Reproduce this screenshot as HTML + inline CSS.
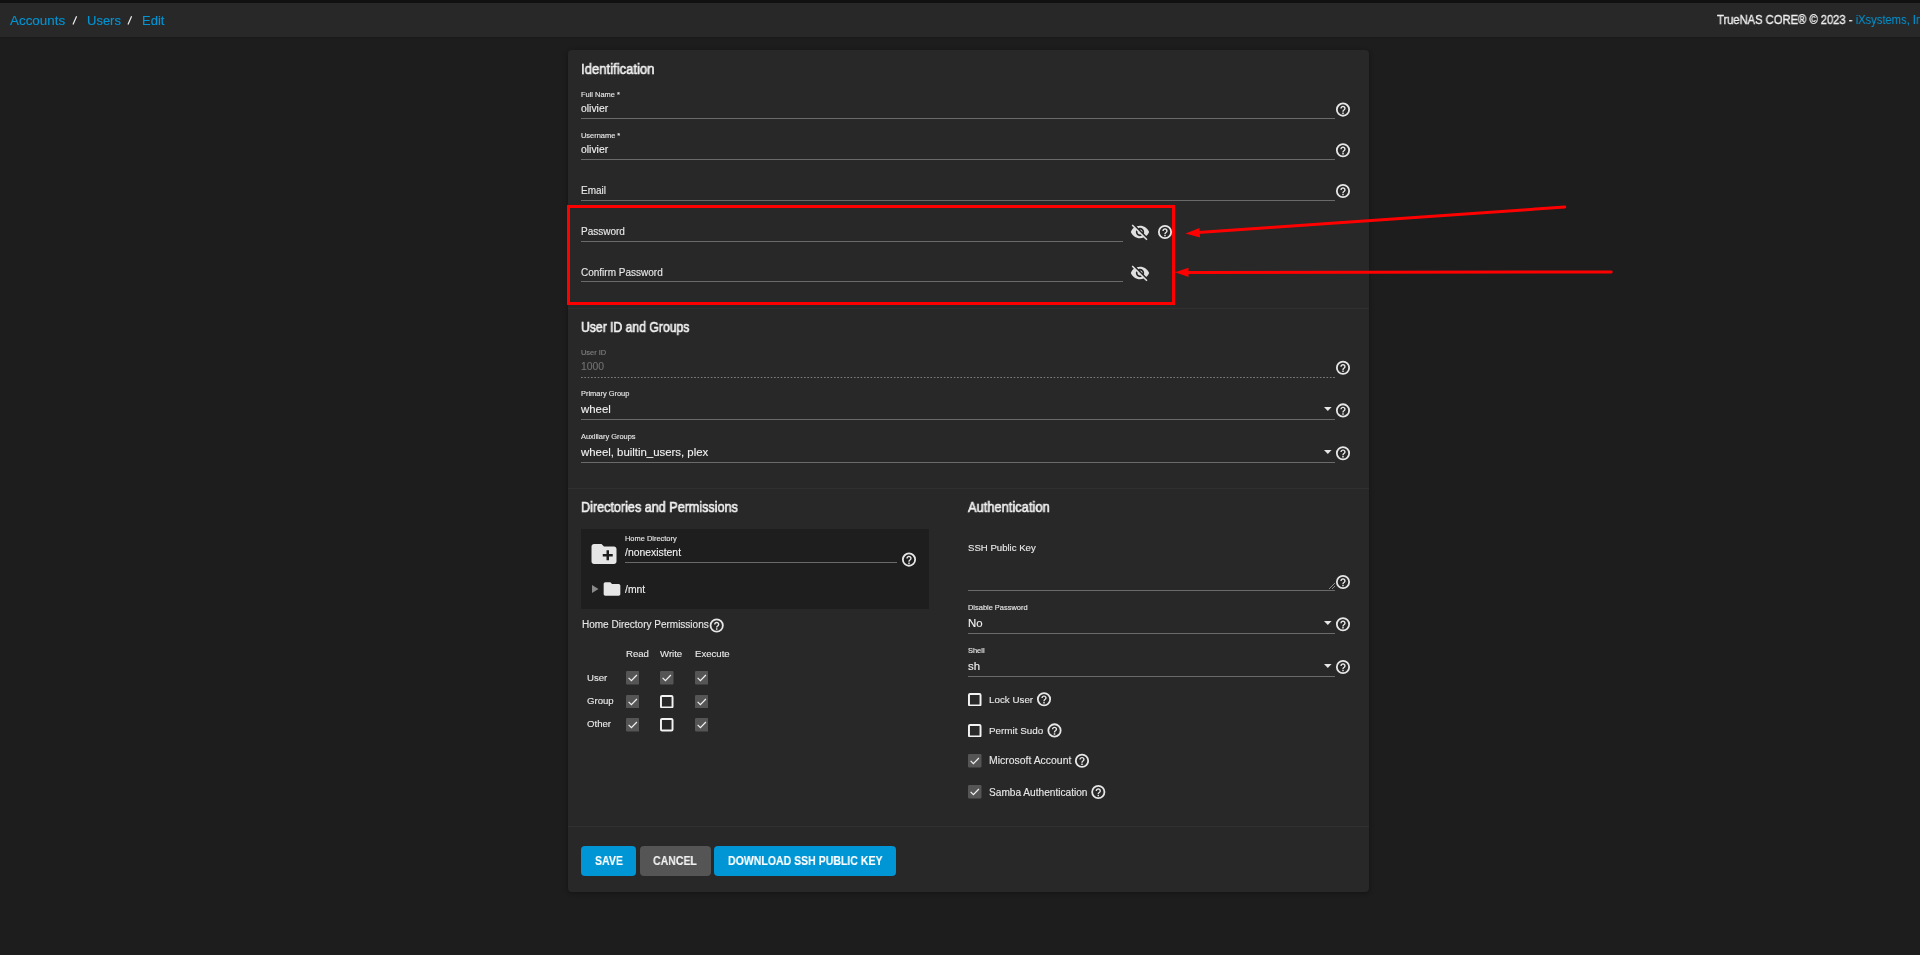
<!DOCTYPE html>
<html><head><meta charset="utf-8"><title>Edit User</title>
<style>
html,body{margin:0;-webkit-font-smoothing:antialiased;padding:0;width:1920px;height:955px;overflow:hidden;background:#1d1d1d;font-family:"Liberation Sans",sans-serif;}
.t{position:absolute;white-space:nowrap;will-change:transform;-webkit-text-stroke:0.12px currentColor;}
.r{position:absolute;}
</style></head><body>
<div class="r" style="left:0px;top:0px;width:1920px;height:3px;background:#111"></div>
<div class="r" style="left:0px;top:3px;width:1920px;height:34px;background:#282828"></div>
<div class="r" style="left:0px;top:37px;width:1920px;height:1px;background:#1a1a1a"></div>
<div class="t" style="left:10px;top:14.07px;font-size:13.4px;line-height:13.4px;color:#0095d5;font-weight:400;">Accounts</div>
<svg width="200" height="40" style="position:absolute;left:0;top:0"><path d="M73 24.6L76.6 16.2M128 24.6L131.6 16.2" stroke="#e8e8e8" stroke-width="1.25"/></svg>
<div class="t" style="left:87.0px;top:14.24px;font-size:13px;line-height:13px;color:#0095d5;font-weight:400;">Users</div>
<div class="t" style="left:142.0px;top:14.24px;font-size:13px;line-height:13px;color:#0095d5;font-weight:400;">Edit</div>
<div class="t" style="left:1716.5px;top:13.78px;font-size:12.9px;line-height:12.9px;color:#efefef;font-weight:400;transform:scaleX(0.868);transform-origin:0 0;-webkit-text-stroke:0.35px #efefef;">TrueNAS CORE® © 2023 - <span style="color:#0095d5;-webkit-text-stroke:0">iXsystems, Inc.</span></div>
<div class="r" style="left:568px;top:50px;width:801px;height:842px;background:#282828;border-radius:4px;box-shadow:0 1px 5px rgba(0,0,0,.35)"></div>
<div class="r" style="left:568px;top:308px;width:801px;height:1px;background:#303030"></div>
<div class="r" style="left:568px;top:488px;width:801px;height:1px;background:#303030"></div>
<div class="r" style="left:568px;top:826px;width:801px;height:1px;background:#303030"></div>
<div class="t" style="left:581px;top:61.82px;font-size:14px;line-height:14px;color:#f0f0f0;font-weight:400;transform:scaleX(0.935);transform-origin:0 0;-webkit-text-stroke:0.6px #f0f0f0;">Identification</div>
<div class="t" style="left:581px;top:91.09px;font-size:7.45px;line-height:7.45px;color:#e8e8e8;font-weight:400;">Full Name *</div>
<div class="t" style="left:581px;top:103.84px;font-size:10.4px;line-height:10.4px;color:#f0f0f0;font-weight:400;">olivier</div>
<div class="r" style="left:581px;top:118px;width:754px;height:1px;background:#6a6a6a"></div>
<svg width="20" height="20" viewBox="0 0 20 20" style="position:absolute;left:1333px;top:99px"><circle cx="10.00" cy="10.60" r="6.15" fill="none" stroke="#e6e6e6" stroke-width="1.8"/><g transform="translate(10.00 10.80) scale(0.64) translate(-12 -12)"><path fill="#e6e6e6" d="M10.85 18.4h2.3v-2.3h-2.3v2.3zm1.15-12.6c-2.3 0-4.15 1.85-4.15 4.15h2.2c0-1.05.9-1.95 1.95-1.95s1.95.9 1.95 1.95c0 1.9-3.1 1.8-3.1 5.05h2.2c0-2.2 3.1-2.6 3.1-5.05 0-2.3-1.850-4.15-4.15-4.15z"/></g></svg>
<div class="t" style="left:581px;top:132.09px;font-size:7.45px;line-height:7.45px;color:#e8e8e8;font-weight:400;">Username *</div>
<div class="t" style="left:581px;top:144.84px;font-size:10.4px;line-height:10.4px;color:#f0f0f0;font-weight:400;">olivier</div>
<div class="r" style="left:581px;top:159px;width:754px;height:1px;background:#6a6a6a"></div>
<svg width="20" height="20" viewBox="0 0 20 20" style="position:absolute;left:1333px;top:140px"><circle cx="10.00" cy="10.30" r="6.15" fill="none" stroke="#e6e6e6" stroke-width="1.8"/><g transform="translate(10.00 10.50) scale(0.64) translate(-12 -12)"><path fill="#e6e6e6" d="M10.85 18.4h2.3v-2.3h-2.3v2.3zm1.15-12.6c-2.3 0-4.15 1.85-4.15 4.15h2.2c0-1.05.9-1.95 1.95-1.95s1.95.9 1.95 1.95c0 1.9-3.1 1.8-3.1 5.05h2.2c0-2.2 3.1-2.6 3.1-5.05 0-2.3-1.850-4.15-4.15-4.15z"/></g></svg>
<div class="t" style="left:581px;top:186.01px;font-size:10px;line-height:10px;color:#e8e8e8;font-weight:400;">Email</div>
<div class="r" style="left:581px;top:200px;width:754px;height:1px;background:#6a6a6a"></div>
<svg width="20" height="20" viewBox="0 0 20 20" style="position:absolute;left:1333px;top:181px"><circle cx="10.00" cy="10.00" r="6.15" fill="none" stroke="#e6e6e6" stroke-width="1.8"/><g transform="translate(10.00 10.20) scale(0.64) translate(-12 -12)"><path fill="#e6e6e6" d="M10.85 18.4h2.3v-2.3h-2.3v2.3zm1.15-12.6c-2.3 0-4.15 1.85-4.15 4.15h2.2c0-1.05.9-1.95 1.95-1.95s1.95.9 1.95 1.95c0 1.9-3.1 1.8-3.1 5.05h2.2c0-2.2 3.1-2.6 3.1-5.05 0-2.3-1.850-4.15-4.15-4.15z"/></g></svg>
<div class="t" style="left:581px;top:227.01px;font-size:10px;line-height:10px;color:#e8e8e8;font-weight:400;">Password</div>
<div class="r" style="left:581px;top:241px;width:542px;height:1px;background:#6a6a6a"></div>
<svg width="20" height="20" viewBox="0 0 20 20" style="position:absolute;left:1155px;top:222px"><circle cx="10.00" cy="10.00" r="6.15" fill="none" stroke="#e6e6e6" stroke-width="1.8"/><g transform="translate(10.00 10.20) scale(0.64) translate(-12 -12)"><path fill="#e6e6e6" d="M10.85 18.4h2.3v-2.3h-2.3v2.3zm1.15-12.6c-2.3 0-4.15 1.85-4.15 4.15h2.2c0-1.05.9-1.95 1.95-1.95s1.95.9 1.95 1.95c0 1.9-3.1 1.8-3.1 5.05h2.2c0-2.2 3.1-2.6 3.1-5.05 0-2.3-1.850-4.15-4.15-4.15z"/></g></svg>
<svg width="20" height="20" viewBox="0 0 24 24" style="position:absolute;left:1130.00px;top:222.00px"><path fill="#e0e0e0" d="M12 7c2.76 0 5 2.24 5 5 0 .65-.13 1.26-.36 1.83l2.92 2.92c1.510-1.26 2.7-2.89 3.43-4.75-1.73-4.39-6-7.5-11-7.5-1.4 0-2.74.25-3.98.7l2.16 2.16C10.74 7.13 11.350 7 12 7zM2 4.27l2.28 2.28.46.46C3.08 8.3 1.78 10.02 1 12c1.73 4.39 6 7.5 11 7.5 1.55 0 3.03-.3 4.38-.84l.42.42L19.73 22 21 20.73 3.27 3 2 4.27zM7.53 9.8l1.55 1.55c-.05.21-.08.43-.08.65 0 1.66 1.34 3 3 3 .22 0 .44-.03.65-.08l1.55 1.55c-.67.33-1.41.53-2.2.53-2.76 0-5-2.24-5-5 0-.79.2-1.53.53-2.2zm4.31-.78l3.15 3.15.02-.16c0-1.66-1.34-3-3-3l-.17.01z"/></svg>
<div class="t" style="left:581px;top:268.01px;font-size:10px;line-height:10px;color:#e8e8e8;font-weight:400;">Confirm Password</div>
<div class="r" style="left:581px;top:281px;width:542px;height:1px;background:#6a6a6a"></div>
<svg width="20" height="20" viewBox="0 0 24 24" style="position:absolute;left:1130.00px;top:262.50px"><path fill="#e0e0e0" d="M12 7c2.76 0 5 2.24 5 5 0 .65-.13 1.26-.36 1.83l2.92 2.92c1.510-1.26 2.7-2.89 3.43-4.75-1.73-4.39-6-7.5-11-7.5-1.4 0-2.74.25-3.98.7l2.16 2.16C10.74 7.13 11.350 7 12 7zM2 4.27l2.28 2.28.46.46C3.08 8.3 1.78 10.02 1 12c1.73 4.39 6 7.5 11 7.5 1.55 0 3.03-.3 4.38-.84l.42.42L19.73 22 21 20.73 3.27 3 2 4.27zM7.53 9.8l1.55 1.55c-.05.21-.08.43-.08.65 0 1.66 1.34 3 3 3 .22 0 .44-.03.65-.08l1.55 1.55c-.67.33-1.41.53-2.2.53-2.76 0-5-2.24-5-5 0-.79.2-1.53.53-2.2zm4.31-.78l3.15 3.15.02-.16c0-1.66-1.34-3-3-3l-.17.01z"/></svg>
<div class="t" style="left:581px;top:319.82px;font-size:14px;line-height:14px;color:#f0f0f0;font-weight:400;transform:scaleX(0.87);transform-origin:0 0;-webkit-text-stroke:0.6px #f0f0f0;">User ID and Groups</div>
<div class="t" style="left:581px;top:349.09px;font-size:7.45px;line-height:7.45px;color:#808080;font-weight:400;">User ID</div>
<div class="t" style="left:581px;top:361.84px;font-size:10.4px;line-height:10.4px;color:#707070;font-weight:400;">1000</div>
<div class="r" style="left:581px;top:377px;width:754px;height:1px;background-image:linear-gradient(90deg,#7a7a7a 60%,transparent 60%);background-size:3.33px 1px"></div>
<svg width="20" height="20" viewBox="0 0 20 20" style="position:absolute;left:1333px;top:357px"><circle cx="10.00" cy="10.80" r="6.15" fill="none" stroke="#e6e6e6" stroke-width="1.8"/><g transform="translate(10.00 11.00) scale(0.64) translate(-12 -12)"><path fill="#e6e6e6" d="M10.85 18.4h2.3v-2.3h-2.3v2.3zm1.15-12.6c-2.3 0-4.15 1.85-4.15 4.15h2.2c0-1.05.9-1.95 1.95-1.95s1.95.9 1.95 1.95c0 1.9-3.1 1.8-3.1 5.05h2.2c0-2.2 3.1-2.6 3.1-5.05 0-2.3-1.850-4.15-4.15-4.15z"/></g></svg>
<div class="t" style="left:581px;top:390.09px;font-size:7.45px;line-height:7.45px;color:#e8e8e8;font-weight:400;">Primary Group</div>
<div class="t" style="left:581px;top:403.92px;font-size:11.4px;line-height:11.4px;color:#f0f0f0;font-weight:400;">wheel</div>
<div class="r" style="left:581px;top:419px;width:754px;height:1px;background:#6a6a6a"></div>
<svg width="20" height="20" viewBox="0 0 20 20" style="position:absolute;left:1333px;top:400px"><circle cx="10.00" cy="10.40" r="6.15" fill="none" stroke="#e6e6e6" stroke-width="1.8"/><g transform="translate(10.00 10.60) scale(0.64) translate(-12 -12)"><path fill="#e6e6e6" d="M10.85 18.4h2.3v-2.3h-2.3v2.3zm1.15-12.6c-2.3 0-4.15 1.85-4.15 4.15h2.2c0-1.05.9-1.95 1.95-1.95s1.95.9 1.95 1.95c0 1.9-3.1 1.8-3.1 5.05h2.2c0-2.2 3.1-2.6 3.1-5.05 0-2.3-1.850-4.15-4.15-4.15z"/></g></svg>
<svg width="7.6" height="4" style="position:absolute;left:1324px;top:407.4px" viewBox="0 0 10 5" preserveAspectRatio="none"><path d="M0 0L10 0L5 5z" fill="#e6e6e6"/></svg>
<div class="t" style="left:581px;top:433.09px;font-size:7.45px;line-height:7.45px;color:#e8e8e8;font-weight:400;">Auxiliary Groups</div>
<div class="t" style="left:581px;top:446.92px;font-size:11.4px;line-height:11.4px;color:#f0f0f0;font-weight:400;">wheel, builtin_users, plex</div>
<div class="r" style="left:581px;top:462px;width:754px;height:1px;background:#6a6a6a"></div>
<svg width="20" height="20" viewBox="0 0 20 20" style="position:absolute;left:1333px;top:443px"><circle cx="10.00" cy="10.20" r="6.15" fill="none" stroke="#e6e6e6" stroke-width="1.8"/><g transform="translate(10.00 10.40) scale(0.64) translate(-12 -12)"><path fill="#e6e6e6" d="M10.85 18.4h2.3v-2.3h-2.3v2.3zm1.15-12.6c-2.3 0-4.15 1.85-4.15 4.15h2.2c0-1.05.9-1.95 1.95-1.95s1.95.9 1.95 1.95c0 1.9-3.1 1.8-3.1 5.05h2.2c0-2.2 3.1-2.6 3.1-5.05 0-2.3-1.850-4.15-4.15-4.15z"/></g></svg>
<svg width="7.6" height="4" style="position:absolute;left:1324px;top:450.2px" viewBox="0 0 10 5" preserveAspectRatio="none"><path d="M0 0L10 0L5 5z" fill="#e6e6e6"/></svg>
<div class="t" style="left:581px;top:499.82px;font-size:14px;line-height:14px;color:#f0f0f0;font-weight:400;transform:scaleX(0.9);transform-origin:0 0;-webkit-text-stroke:0.6px #f0f0f0;">Directories and Permissions</div>
<div class="r" style="left:581px;top:529px;width:348px;height:80px;background:#1e1e1e"></div>
<svg width="30" height="30" viewBox="0 0 24 24" style="position:absolute;left:588.5px;top:538.5px"><path fill="#e6e6e6" d="M20 6h-8l-2-2H4c-1.11 0-1.99.89-1.99 2L2 18c0 1.11.89 2 2 2h16c1.11 0 2-.89 2-2V8c0-1.11-.89-2-2-2z"/><path fill="#1e1e1e" d="M19 14h-3v3h-2v-3h-3v-2h3V9h2v3h3v2z"/></svg>
<div class="t" style="left:625px;top:535.09px;font-size:7.45px;line-height:7.45px;color:#e8e8e8;font-weight:400;">Home Directory</div>
<div class="t" style="left:625px;top:547.84px;font-size:10.4px;line-height:10.4px;color:#f0f0f0;font-weight:400;">/nonexistent</div>
<div class="r" style="left:625px;top:562px;width:272px;height:1px;background:#6a6a6a"></div>
<svg width="20" height="20" viewBox="0 0 20 20" style="position:absolute;left:899px;top:549px"><circle cx="10.00" cy="10.60" r="6.15" fill="none" stroke="#e6e6e6" stroke-width="1.8"/><g transform="translate(10.00 10.80) scale(0.64) translate(-12 -12)"><path fill="#e6e6e6" d="M10.85 18.4h2.3v-2.3h-2.3v2.3zm1.15-12.6c-2.3 0-4.15 1.85-4.15 4.15h2.2c0-1.05.9-1.95 1.95-1.95s1.95.9 1.95 1.95c0 1.9-3.1 1.8-3.1 5.05h2.2c0-2.2 3.1-2.6 3.1-5.05 0-2.3-1.850-4.15-4.15-4.15z"/></g></svg>
<svg width="7" height="8" viewBox="0 0 7 8" style="position:absolute;left:592px;top:585px"><path d="M0 0L6.5 4L0 8z" fill="#8a8a8a"/></svg>
<svg width="20" height="20" viewBox="0 0 24 24" style="position:absolute;left:602px;top:578.7px"><path fill="#e6e6e6" d="M10 4H4c-1.1 0-1.99.9-1.99 2L2 18c0 1.1.9 2 2 2h16c1.1 0 2-.9 2-2V8c0-1.1-.9-2-2-2h-8l-2-2z"/></svg>
<div class="t" style="left:625px;top:584.84px;font-size:10.4px;line-height:10.4px;color:#f0f0f0;font-weight:400;">/mnt</div>
<div class="t" style="left:581.5px;top:620.01px;font-size:10px;line-height:10px;color:#e8e8e8;font-weight:400;">Home Directory Permissions</div>
<svg width="20" height="20" viewBox="0 0 20 20" style="position:absolute;left:706px;top:615px"><circle cx="10.70" cy="10.50" r="6.15" fill="none" stroke="#e6e6e6" stroke-width="1.8"/><g transform="translate(10.70 10.70) scale(0.64) translate(-12 -12)"><path fill="#e6e6e6" d="M10.85 18.4h2.3v-2.3h-2.3v2.3zm1.15-12.6c-2.3 0-4.15 1.85-4.15 4.15h2.2c0-1.05.9-1.95 1.95-1.95s1.95.9 1.95 1.95c0 1.9-3.1 1.8-3.1 5.05h2.2c0-2.2 3.1-2.6 3.1-5.05 0-2.3-1.850-4.15-4.15-4.15z"/></g></svg>
<div class="t" style="left:626px;top:649.18px;font-size:9.6px;line-height:9.6px;color:#e8e8e8;font-weight:400;">Read</div>
<div class="t" style="left:660px;top:649.18px;font-size:9.6px;line-height:9.6px;color:#e8e8e8;font-weight:400;">Write</div>
<div class="t" style="left:695px;top:649.18px;font-size:9.6px;line-height:9.6px;color:#e8e8e8;font-weight:400;">Execute</div>
<div class="t" style="left:587.3px;top:673.18px;font-size:9.6px;line-height:9.6px;color:#e8e8e8;font-weight:400;">User</div>
<svg width="13.5" height="13.5" viewBox="0 0 18 18" style="position:absolute;left:625.8px;top:671.3px"><rect x="0" y="0" width="18" height="18" rx="1.5" fill="#555"/><path d="M3.5 9.2 L7.2 12.8 L14.5 5.3" fill="none" stroke="#f2f2f2" stroke-width="1.6"/></svg>
<svg width="13.5" height="13.5" viewBox="0 0 18 18" style="position:absolute;left:660.1px;top:671.3px"><rect x="0" y="0" width="18" height="18" rx="1.5" fill="#555"/><path d="M3.5 9.2 L7.2 12.8 L14.5 5.3" fill="none" stroke="#f2f2f2" stroke-width="1.6"/></svg>
<svg width="13.5" height="13.5" viewBox="0 0 18 18" style="position:absolute;left:694.8px;top:671.3px"><rect x="0" y="0" width="18" height="18" rx="1.5" fill="#555"/><path d="M3.5 9.2 L7.2 12.8 L14.5 5.3" fill="none" stroke="#f2f2f2" stroke-width="1.6"/></svg>
<div class="t" style="left:587.3px;top:696.18px;font-size:9.6px;line-height:9.6px;color:#e8e8e8;font-weight:400;">Group</div>
<svg width="13.5" height="13.5" viewBox="0 0 18 18" style="position:absolute;left:625.8px;top:694.7px"><rect x="0" y="0" width="18" height="18" rx="1.5" fill="#555"/><path d="M3.5 9.2 L7.2 12.8 L14.5 5.3" fill="none" stroke="#f2f2f2" stroke-width="1.6"/></svg>
<svg width="13.5" height="13.5" viewBox="0 0 18 18" style="position:absolute;left:660.1px;top:694.7px"><rect x="1.3" y="1.3" width="15.4" height="15.4" rx="1.5" fill="none" stroke="#f2f2f2" stroke-width="2.6"/></svg>
<svg width="13.5" height="13.5" viewBox="0 0 18 18" style="position:absolute;left:694.8px;top:694.7px"><rect x="0" y="0" width="18" height="18" rx="1.5" fill="#555"/><path d="M3.5 9.2 L7.2 12.8 L14.5 5.3" fill="none" stroke="#f2f2f2" stroke-width="1.6"/></svg>
<div class="t" style="left:587.3px;top:719.18px;font-size:9.6px;line-height:9.6px;color:#e8e8e8;font-weight:400;">Other</div>
<svg width="13.5" height="13.5" viewBox="0 0 18 18" style="position:absolute;left:625.8px;top:718px"><rect x="0" y="0" width="18" height="18" rx="1.5" fill="#555"/><path d="M3.5 9.2 L7.2 12.8 L14.5 5.3" fill="none" stroke="#f2f2f2" stroke-width="1.6"/></svg>
<svg width="13.5" height="13.5" viewBox="0 0 18 18" style="position:absolute;left:660.1px;top:718px"><rect x="1.3" y="1.3" width="15.4" height="15.4" rx="1.5" fill="none" stroke="#f2f2f2" stroke-width="2.6"/></svg>
<svg width="13.5" height="13.5" viewBox="0 0 18 18" style="position:absolute;left:694.8px;top:718px"><rect x="0" y="0" width="18" height="18" rx="1.5" fill="#555"/><path d="M3.5 9.2 L7.2 12.8 L14.5 5.3" fill="none" stroke="#f2f2f2" stroke-width="1.6"/></svg>
<div class="t" style="left:968.3px;top:499.82px;font-size:14px;line-height:14px;color:#f0f0f0;font-weight:400;transform:scaleX(0.92);transform-origin:0 0;-webkit-text-stroke:0.6px #f0f0f0;">Authentication</div>
<div class="t" style="left:967.6px;top:543.18px;font-size:9.6px;line-height:9.6px;color:#e8e8e8;font-weight:400;">SSH Public Key</div>
<div class="r" style="left:968px;top:590px;width:367px;height:1px;background:#6a6a6a"></div>
<svg width="6" height="6" viewBox="0 0 6 6" style="position:absolute;left:1328.5px;top:582.5px"><path d="M6 0L0 6M6 3L3 6" stroke="#aaa" stroke-width="0.8"/></svg>
<svg width="20" height="20" viewBox="0 0 20 20" style="position:absolute;left:1333px;top:572px"><circle cx="10.00" cy="10.00" r="6.15" fill="none" stroke="#e6e6e6" stroke-width="1.8"/><g transform="translate(10.00 10.20) scale(0.64) translate(-12 -12)"><path fill="#e6e6e6" d="M10.85 18.4h2.3v-2.3h-2.3v2.3zm1.15-12.6c-2.3 0-4.15 1.85-4.15 4.15h2.2c0-1.05.9-1.95 1.95-1.95s1.95.9 1.95 1.95c0 1.9-3.1 1.8-3.1 5.05h2.2c0-2.2 3.1-2.6 3.1-5.05 0-2.3-1.850-4.15-4.15-4.15z"/></g></svg>
<div class="t" style="left:968px;top:604.09px;font-size:7.45px;line-height:7.45px;color:#e8e8e8;font-weight:400;">Disable Password</div>
<div class="t" style="left:968px;top:617.92px;font-size:11.4px;line-height:11.4px;color:#f0f0f0;font-weight:400;">No</div>
<div class="r" style="left:968px;top:633px;width:367px;height:1px;background:#6a6a6a"></div>
<svg width="20" height="20" viewBox="0 0 20 20" style="position:absolute;left:1333px;top:614px"><circle cx="10.00" cy="10.30" r="6.15" fill="none" stroke="#e6e6e6" stroke-width="1.8"/><g transform="translate(10.00 10.50) scale(0.64) translate(-12 -12)"><path fill="#e6e6e6" d="M10.85 18.4h2.3v-2.3h-2.3v2.3zm1.15-12.6c-2.3 0-4.15 1.85-4.15 4.15h2.2c0-1.05.9-1.95 1.95-1.95s1.95.9 1.95 1.95c0 1.9-3.1 1.8-3.1 5.05h2.2c0-2.2 3.1-2.6 3.1-5.05 0-2.3-1.850-4.15-4.15-4.15z"/></g></svg>
<svg width="7.6" height="4" style="position:absolute;left:1324px;top:621px" viewBox="0 0 10 5" preserveAspectRatio="none"><path d="M0 0L10 0L5 5z" fill="#e6e6e6"/></svg>
<div class="t" style="left:968px;top:647.09px;font-size:7.45px;line-height:7.45px;color:#e8e8e8;font-weight:400;">Shell</div>
<div class="t" style="left:968px;top:660.92px;font-size:11.4px;line-height:11.4px;color:#f0f0f0;font-weight:400;">sh</div>
<div class="r" style="left:968px;top:676px;width:367px;height:1px;background:#6a6a6a"></div>
<svg width="20" height="20" viewBox="0 0 20 20" style="position:absolute;left:1333px;top:657px"><circle cx="10.00" cy="10.00" r="6.15" fill="none" stroke="#e6e6e6" stroke-width="1.8"/><g transform="translate(10.00 10.20) scale(0.64) translate(-12 -12)"><path fill="#e6e6e6" d="M10.85 18.4h2.3v-2.3h-2.3v2.3zm1.15-12.6c-2.3 0-4.15 1.85-4.15 4.15h2.2c0-1.05.9-1.95 1.95-1.95s1.95.9 1.95 1.95c0 1.9-3.1 1.8-3.1 5.05h2.2c0-2.2 3.1-2.6 3.1-5.05 0-2.3-1.850-4.15-4.15-4.15z"/></g></svg>
<svg width="7.6" height="4" style="position:absolute;left:1324px;top:664px" viewBox="0 0 10 5" preserveAspectRatio="none"><path d="M0 0L10 0L5 5z" fill="#e6e6e6"/></svg>
<svg width="13.5" height="13.5" viewBox="0 0 18 18" style="position:absolute;left:968.3px;top:692.5px"><rect x="1.3" y="1.3" width="15.4" height="15.4" rx="1.5" fill="none" stroke="#f2f2f2" stroke-width="2.6"/></svg>
<div class="t" style="left:989px;top:695.09px;font-size:9.8px;line-height:9.8px;color:#e8e8e8;font-weight:400;">Lock User</div>
<svg width="20" height="20" viewBox="0 0 20 20" style="position:absolute;left:1034px;top:689px"><circle cx="10.00" cy="10.20" r="6.15" fill="none" stroke="#e6e6e6" stroke-width="1.8"/><g transform="translate(10.00 10.40) scale(0.64) translate(-12 -12)"><path fill="#e6e6e6" d="M10.85 18.4h2.3v-2.3h-2.3v2.3zm1.15-12.6c-2.3 0-4.15 1.85-4.15 4.15h2.2c0-1.05.9-1.95 1.95-1.95s1.95.9 1.95 1.95c0 1.9-3.1 1.8-3.1 5.05h2.2c0-2.2 3.1-2.6 3.1-5.05 0-2.3-1.850-4.15-4.15-4.15z"/></g></svg>
<svg width="13.5" height="13.5" viewBox="0 0 18 18" style="position:absolute;left:968.3px;top:723.7px"><rect x="1.3" y="1.3" width="15.4" height="15.4" rx="1.5" fill="none" stroke="#f2f2f2" stroke-width="2.6"/></svg>
<div class="t" style="left:989px;top:726.06px;font-size:9.9px;line-height:9.9px;color:#e8e8e8;font-weight:400;">Permit Sudo</div>
<svg width="20" height="20" viewBox="0 0 20 20" style="position:absolute;left:1044px;top:720px"><circle cx="10.50" cy="10.40" r="6.15" fill="none" stroke="#e6e6e6" stroke-width="1.8"/><g transform="translate(10.50 10.60) scale(0.64) translate(-12 -12)"><path fill="#e6e6e6" d="M10.85 18.4h2.3v-2.3h-2.3v2.3zm1.15-12.6c-2.3 0-4.15 1.85-4.15 4.15h2.2c0-1.05.9-1.95 1.95-1.95s1.95.9 1.95 1.95c0 1.9-3.1 1.8-3.1 5.05h2.2c0-2.2 3.1-2.6 3.1-5.05 0-2.3-1.850-4.15-4.15-4.15z"/></g></svg>
<svg width="13.5" height="13.5" viewBox="0 0 18 18" style="position:absolute;left:968.3px;top:754px"><rect x="0" y="0" width="18" height="18" rx="1.5" fill="#555"/><path d="M3.5 9.2 L7.2 12.8 L14.5 5.3" fill="none" stroke="#f2f2f2" stroke-width="1.6"/></svg>
<div class="t" style="left:989px;top:755.81px;font-size:10.45px;line-height:10.45px;color:#e8e8e8;font-weight:400;">Microsoft Account</div>
<svg width="20" height="20" viewBox="0 0 20 20" style="position:absolute;left:1072px;top:750px"><circle cx="10.00" cy="10.70" r="6.15" fill="none" stroke="#e6e6e6" stroke-width="1.8"/><g transform="translate(10.00 10.90) scale(0.64) translate(-12 -12)"><path fill="#e6e6e6" d="M10.85 18.4h2.3v-2.3h-2.3v2.3zm1.15-12.6c-2.3 0-4.15 1.85-4.15 4.15h2.2c0-1.05.9-1.95 1.95-1.95s1.95.9 1.95 1.95c0 1.9-3.1 1.8-3.1 5.05h2.2c0-2.2 3.1-2.6 3.1-5.05 0-2.3-1.850-4.15-4.15-4.15z"/></g></svg>
<svg width="13.5" height="13.5" viewBox="0 0 18 18" style="position:absolute;left:968.3px;top:785.3px"><rect x="0" y="0" width="18" height="18" rx="1.5" fill="#555"/><path d="M3.5 9.2 L7.2 12.8 L14.5 5.3" fill="none" stroke="#f2f2f2" stroke-width="1.6"/></svg>
<div class="t" style="left:989px;top:787.94px;font-size:10.15px;line-height:10.15px;color:#e8e8e8;font-weight:400;">Samba Authentication</div>
<svg width="20" height="20" viewBox="0 0 20 20" style="position:absolute;left:1088px;top:782px"><circle cx="10.30" cy="10.00" r="6.15" fill="none" stroke="#e6e6e6" stroke-width="1.8"/><g transform="translate(10.30 10.20) scale(0.64) translate(-12 -12)"><path fill="#e6e6e6" d="M10.85 18.4h2.3v-2.3h-2.3v2.3zm1.15-12.6c-2.3 0-4.15 1.85-4.15 4.15h2.2c0-1.05.9-1.95 1.95-1.95s1.95.9 1.95 1.95c0 1.9-3.1 1.8-3.1 5.05h2.2c0-2.2 3.1-2.6 3.1-5.05 0-2.3-1.850-4.15-4.15-4.15z"/></g></svg>
<div class="r" style="left:581px;top:846px;width:55px;height:30px;background:#0095d5;border-radius:4px"></div>
<div class="r" style="left:640px;top:846px;width:71px;height:30px;background:#555;border-radius:4px"></div>
<div class="r" style="left:714px;top:846px;width:182px;height:30px;background:#0095d5;border-radius:4px"></div>
<div class="t" style="left:594.8px;top:854.87px;font-size:12.7px;line-height:12.7px;color:#fff;font-weight:700;transform:scaleX(0.83);transform-origin:0 0;">SAVE</div>
<div class="t" style="left:653.3px;top:854.87px;font-size:12.7px;line-height:12.7px;color:#f2f2f2;font-weight:700;transform:scaleX(0.83);transform-origin:0 0;">CANCEL</div>
<div class="t" style="left:727.7px;top:854.87px;font-size:12.7px;line-height:12.7px;color:#fff;font-weight:700;transform:scaleX(0.83);transform-origin:0 0;">DOWNLOAD SSH PUBLIC KEY</div>
<div class="r" style="left:567px;top:205px;width:608px;height:100px;border:3px solid #ff0000;box-sizing:border-box"></div>
<svg width="1920" height="955" style="position:absolute;left:0;top:0"><line x1="1564.8" y1="207" x2="1198" y2="232.4" stroke="#ff0000" stroke-width="3" stroke-linecap="round"/><path d="M1185.5 233.5 L1199.5 228 L1200 237.5 Z" fill="#ff0000"/><line x1="1611.2" y1="271.9" x2="1186" y2="272.5" stroke="#ff0000" stroke-width="3" stroke-linecap="round"/><path d="M1175 272.3 L1188.5 267.7 L1188.5 276.9 Z" fill="#ff0000"/></svg>
</body></html>
